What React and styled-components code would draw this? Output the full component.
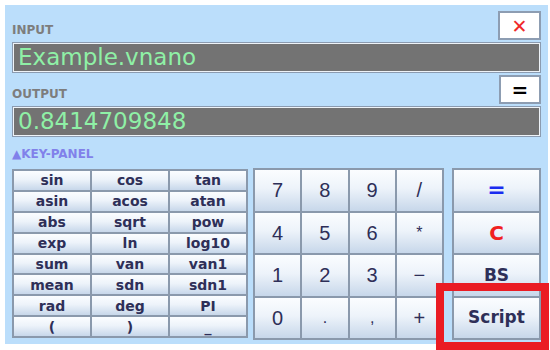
import styled, { createGlobalStyle } from "styled-components"

const Global = createGlobalStyle`
    body {
        margin: 0;
        background: #ffffff;
        font-family: "DejaVu Sans", sans-serif;
    }
`

const Page = styled.div`
    position: relative;
    width: 550px;
    height: 350px;
    overflow: hidden;
`

const Panel = styled.div`
    margin: 5px 2px 0 5px;
    width: 543px;
    height: 339px;
    box-sizing: border-box;
    background: #bbdefb;
    padding: 6px 7px 0 7px;
    display: flex;
    flex-direction: column;
`

const HeadRow = styled.div`
    display: flex;
    justify-content: space-between;
    align-items: flex-end;
    height: 29px;
    margin-bottom: 2px;
`

const Label = styled.div`
    font-size: 12px;
    font-weight: bold;
    color: ${props => props.accent ? "#8181ea" : "#7d7d7d"};
    padding-bottom: ${props => props.accent ? "0" : "3px"};
    line-height: 14px;
`

const SmallButton = styled.div`
    width: ${props => props.wide}px;
    height: 29px;
    box-sizing: border-box;
    background: #ffffff;
    border: 2px solid #8d9db2;
    display: flex;
    align-items: center;
    justify-content: center;
    color: ${props => props.color};
    font-size: ${props => props.size}px;
    font-weight: ${props => props.bold ? "bold" : "normal"};
    font-family: "DejaVu Sans", sans-serif;
`

const Field = styled.div`
    height: 31px;
    box-sizing: border-box;
    background: #737373;
    border: 1px solid #8b9bb0;
    box-shadow: inset 0 0 0 1px #eef3f8;
    color: #8ff0a6;
    font-size: 23px;
    line-height: 29px;
    padding-left: 5px;
    margin-bottom: 2px;
    font-family: "DejaVu Sans", sans-serif;
`

const KeyPanelTitle = styled.div`
    margin-top: 8px;
    height: 21px;
`

const Keys = styled.div`
    display: flex;
    align-items: flex-start;
`

const Grid = styled.div`
    display: grid;
    grid-template-columns: repeat(${props => props.cols}, 1fr);
    grid-template-rows: repeat(${props => props.rows}, 1fr);
    gap: 2px;
    padding: 2px;
    box-sizing: border-box;
    background: #8a99ac;
    width: ${props => props.w}px;
    height: ${props => props.h}px;
    margin-top: ${props => props.top}px;
    margin-right: ${props => props.gap}px;
`

const Key = styled.div`
    background: linear-gradient(to bottom, #fbfdff 0%, #edf3fa 45%, #c7d7ea 100%);
    display: flex;
    align-items: center;
    justify-content: center;
    color: ${props => props.color || "#2e2f58"};
    font-size: ${props => props.size}px;
    font-weight: ${props => props.bold ? "bold" : "normal"};
    font-family: ${props => props.bold ? '"DejaVu Sans", sans-serif' : '"Liberation Sans", sans-serif'};
    line-height: 1;
`

const Highlight = styled.div`
    position: absolute;
    left: 436px;
    top: 283px;
    width: 113px;
    height: 67px;
    box-sizing: border-box;
    border: 8px solid #ea1c24;
`

const funcs = ["sin", "cos", "tan", "asin", "acos", "atan", "abs", "sqrt", "pow",
    "exp", "ln", "log10", "sum", "van", "van1", "mean", "sdn", "sdn1",
    "rad", "deg", "PI", "(", ")", "_"]

const digits = ["7", "8", "9", "/", "4", "5", "6", "*", "1", "2", "3", "−", "0", ".", ",", "+"]

const ops = [
    { t: "=", color: "#1a2cf0", size: 22 },
    { t: "C", color: "#f02020", size: 20 },
    { t: "BS", size: 17 },
    { t: "Script", size: 17 },
]

const digitSize = (d) => (d === "*" || d === "." || d === ",") ? 16 : 20

const App = () => {
    return (
        <>
            <Global />
            <Page>
                <Panel>
                    <HeadRow>
                        <Label>INPUT</Label>
                        <SmallButton wide={43} color="#f02a2a" size={19}>✕</SmallButton>
                    </HeadRow>
                    <Field>Example.vnano</Field>
                    <HeadRow>
                        <Label>OUTPUT</Label>
                        <SmallButton wide={42} color="#000000" size={20} bold>=</SmallButton>
                    </HeadRow>
                    <Field>0.8414709848</Field>
                    <KeyPanelTitle>
                        <Label accent>▲KEY-PANEL</Label>
                    </KeyPanelTitle>
                    <Keys>
                        <Grid cols={3} rows={8} w={236} h={169} top={1} gap={5}>
                            {funcs.map(f => <Key key={f} bold size={14}>{f}</Key>)}
                        </Grid>
                        <Grid cols={4} rows={4} w={191} h={172} top={0} gap={8}>
                            {digits.map(d => <Key key={d} size={digitSize(d)}>{d}</Key>)}
                        </Grid>
                        <Grid cols={1} rows={4} w={89} h={172} top={0} gap={0}>
                            {ops.map(o => <Key key={o.t} bold size={o.size} color={o.color}>{o.t}</Key>)}
                        </Grid>
                    </Keys>
                </Panel>
                <Highlight />
            </Page>
        </>
    )
}

export default App
